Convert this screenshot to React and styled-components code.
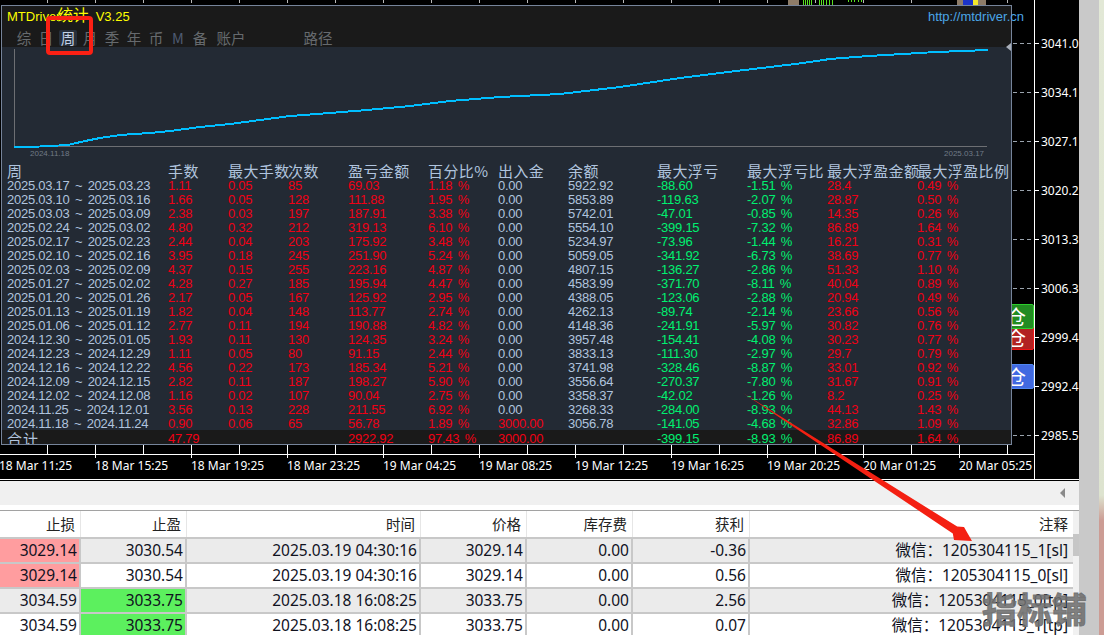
import React from "react";
import styled, { createGlobalStyle } from "styled-components";

const STEEL = "#b0c4de";
const RED = "#f00014";
const GREEN = "#00f070";
const CJK = '"Noto Sans CJK SC", "Noto Sans", sans-serif';
const PANEL_COLUMNS = "161px 60px 60px 60px 80px 70px 70px 89px 90px 80px 90px 1fr";

const GlobalStyle = createGlobalStyle`
  html, body { margin: 0; padding: 0; width: 1104px; height: 635px; overflow: hidden; background: #000; }
  * { box-sizing: border-box; }
`;

const Page = styled.div`
  position: relative;
  display: flex;
  width: 1104px;
  height: 635px;
  overflow: hidden;
`;
const Main = styled.div`
  width: 1079px;
  height: 635px;
  display: flex;
  flex-direction: column;
  background: #fff;
`;
const GreyStrip = styled.div`
  width: 20px;
  background: #c9c9c9;
`;
const PhotoEdge = styled.div`
  width: 5px;
  background: linear-gradient(#e2e8d6 0%, #dde3cf 78%, #cc9c94 82%, #cc9c94 100%);
`;

/* chart */
const Chart = styled.div`
  position: relative;
  height: 480px;
  flex: none;
  display: flex;
  background: #000;
  border-bottom: 1px solid #fff;
  overflow: hidden;
`;
const Plot = styled.div`
  width: 1035px;
  height: 100%;
  flex: none;
  display: flex;
  flex-direction: column;
  border-right: 1px solid #fff;
`;
const PlotBody = styled.div`
  height: 455px;
  flex: none;
  border-bottom: 1px solid #fff;
`;
const TimeAxis = styled.div`
  display: flex;
  margin-left: -1px;
  padding-top: 2px;
  color: #fff;
  font: 12px/18px "Noto Sans", sans-serif;
  white-space: nowrap;
`;
const TimeLabel = styled.span`
  width: 96px;
  flex: none;
`;
const PriceAxis = styled.div`
  flex: 1;
  min-width: 0;
  padding-top: 19px;
  display: flex;
  flex-direction: column;
  color: #fff;
  font: 12px/49px "Noto Sans", sans-serif;
  overflow: hidden;
`;
const PriceLabel = styled.div`
  height: 49px;
  display: flex;
  align-items: center;
  gap: 2px;
  flex: none;
  &::before {
    content: "";
    width: 4px;
    height: 1px;
    background: #fff;
    flex: none;
  }
`;
const ChartMarks = styled.svg`
  position: absolute;
  left: 0;
  top: 0;
`;
const TradeButton = styled.div`
  position: absolute;
  left: 1005px;
  top: ${(p) => p.$top}px;
  width: 29px;
  height: 25px;
  border-radius: 2px;
  background: ${(p) => p.$fill};
  border: 1px solid ${(p) => p.$edge};
  color: #fff;
  font: 20px/23px ${CJK};
  text-align: left;
  overflow: hidden;
  z-index: ${(p) => p.$layer};
`;

/* floating statistics window */
const StatsPanel = styled.div`
  position: absolute;
  left: 1px;
  top: 5px;
  width: 1011px;
  height: 440px;
  z-index: 5;
  display: flex;
  flex-direction: column;
  background: #232a34;
  border: 1px solid #76849a;
`;
const TitleBar = styled.div`
  height: 22px;
  flex: none;
  display: flex;
  justify-content: space-between;
  padding-left: 5px;
  background: #1a1a1a;
  font: 13px/22px "Liberation Sans", sans-serif;
  white-space: nowrap;
`;
const Title = styled.span`
  color: #ffff00;
`;
const TitleCjk = styled.span`
  font: 15.5px/14px ${CJK};
  margin-left: -3px;
`;
const SiteLink = styled.span`
  color: #4aa6e6;
  margin-right: -13px;
`;
const TabBar = styled.div`
  height: 19px;
  flex: none;
  display: flex;
  gap: 4px;
  padding: 2px 0 1px 13px;
  background: #1a1a1a;
`;
const Tab = styled.div`
  width: ${(p) => (p.$wide ? 36 : 18)}px;
  height: 16px;
  flex: none;
  margin-left: ${(p) => p.$push || 0}px;
  border-radius: 2px;
  text-align: center;
  white-space: nowrap;
  font: 14.5px/16px ${CJK};
  color: ${(p) => (p.$active ? "#c4d2e6" : p.$dim ? "#4e5a72" : "#666a6e")};
  background: ${(p) => (p.$active ? "#27303c" : "transparent")};
`;
const CurveBox = styled.div`
  position: relative;
  height: 116px;
  flex: none;
`;
const CurveSvg = styled.svg`
  display: block;
`;
const AxisDate = styled.text`
  font: 8px "Liberation Sans", sans-serif;
  fill: #717a87;
`;
const EdgeMark = styled.div`
  position: absolute;
  right: 0;
  top: -4px;
  width: 0;
  height: 0;
  border-top: 4px solid transparent;
  border-bottom: 4px solid transparent;
  border-right: 5px solid #a8aeb8;
`;
const StatsRow = styled.div`
  display: grid;
  grid-template-columns: ${PANEL_COLUMNS};
  height: ${(p) => p.$height || 14}px;
  flex: none;
  padding-left: 5px;
  white-space: nowrap;
  font: 13px/14px "Liberation Sans", sans-serif;
  letter-spacing: -0.25px;
  word-spacing: 2px;
`;
const HeadRow = styled(StatsRow)`
  color: ${STEEL};
  font: 15px/16px ${CJK};
  letter-spacing: 0.4px;
  word-spacing: 0;
`;
const TotalRow = styled(StatsRow)`
  background: #1a1a1a;
  margin-top: -1px;
  padding-top: 2px;
  overflow: hidden;
`;
const TotalLabel = styled.span`
  color: ${STEEL};
  font: 15px/14px ${CJK};
  letter-spacing: 1px;
`;
const Val = styled.span`
  color: ${(p) => p.$tone};
`;

/* order list */
const Toolbar = styled.div`
  height: 25px;
  flex: none;
  display: flex;
  align-items: center;
  justify-content: flex-end;
  padding-right: 14px;
  background: #f0f0f0;
  border-top: 1px solid #000;
`;
const ScrollLeft = styled.div`
  width: 0;
  height: 0;
  border-top: 5px solid transparent;
  border-bottom: 5px solid transparent;
  border-right: 5px solid #8a8a8a;
`;
const ListWrap = styled.div`
  margin-top: 5px;
  flex: 1;
  display: flex;
  border-top: 1px solid #a2a2a2;
  overflow: hidden;
`;
const OrderList = styled.div`
  width: 1073px;
  flex: none;
`;
const ScrollTrack = styled.div`
  flex: 1;
  background: #f1f1f1;
  padding-top: 23px;
`;
const ScrollThumb = styled.div`
  height: 22px;
  background: #c6c6c6;
`;
const ORDER_COLUMNS = "81px 106px 234px 106px 106px 117px 1fr";
const OrderHead = styled.div`
  display: grid;
  grid-template-columns: ${ORDER_COLUMNS};
  height: 28px;
  border-bottom: 2px solid #c8c8c8;
  background: #fff;
`;
const HeadCell = styled.div`
  text-align: right;
  padding-right: 5px;
  border-right: 1px solid #e6e6e6;
  color: #222;
  font: 14.5px/25px ${CJK};
  &:last-child { border-right: 0; }
`;
const OrderRow = styled.div`
  display: grid;
  grid-template-columns: ${ORDER_COLUMNS};
  height: 25px;
  border-bottom: 2px solid #c8c8c8;
  background: ${(p) => (p.$shade ? "#ebebeb" : "#fff")};
`;
const Cell = styled.div`
  text-align: right;
  padding-right: 2px;
  border-right: 2px solid #c8c8c8;
  color: #10121e;
  white-space: nowrap;
  font: 15.5px/22px "Noto Sans", ${CJK};
  background: ${(p) => p.$fill || "transparent"};
  &:last-child { border-right: 0; padding-right: 5px; }
`;

/* annotations */
const Annotation = styled.svg`
  position: absolute;
  left: 0;
  top: 0;
  z-index: 20;
  pointer-events: none;
`;
const Highlight = styled.div`
  position: absolute;
  left: 46px;
  top: 16px;
  width: 47px;
  height: 39px;
  border: 4px solid #fb2014;
  border-radius: 4px;
  z-index: 21;
`;
const Watermark = styled.div`
  position: absolute;
  left: 982px;
  top: 585px;
  z-index: 22;
  color: rgba(112, 112, 112, 0.9);
  -webkit-text-stroke: 1px rgba(112, 112, 112, 0.9);
  font: 700 35px/46px "Noto Sans CJK SC", sans-serif;
  white-space: nowrap;
`;

const prices = ["3041.0", "3034.1", "3027.1", "3020.2", "3013.3", "3006.3", "2999.4", "2992.4", "2985.5"];
const times = ["18 Mar 11:25", "18 Mar 15:25", "18 Mar 19:25", "18 Mar 23:25", "19 Mar 04:25", "19 Mar 08:25", "19 Mar 12:25", "19 Mar 16:25", "19 Mar 20:25", "20 Mar 01:25", "20 Mar 05:25"];
const tabs = [
  { t: "综" }, { t: "日" }, { t: "周", active: true }, { t: "月" }, { t: "季" }, { t: "年" }, { t: "币" },
  { t: "M", dim: true }, { t: "备" }, { t: "账户", wide: true }, { t: "路径", wide: true, push: 47 },
];
const heads = ["周", "手数", "最大手数", "次数", "盈亏金额", "百分比%", "出入金", "余额", "最大浮亏", "最大浮亏比", "最大浮盈金额", "最大浮盈比例"];
const tones = [STEEL, RED, RED, RED, RED, RED, STEEL, STEEL, GREEN, GREEN, RED, RED];
const rows = [
  ["2025.03.17 ~ 2025.03.23", "1.11", "0.05", "85", "69.03", "1.18 %", "0.00", "5922.92", "-88.60", "-1.51 %", "28.4", "0.49 %"],
  ["2025.03.10 ~ 2025.03.16", "1.66", "0.05", "128", "111.88", "1.95 %", "0.00", "5853.89", "-119.63", "-2.07 %", "28.87", "0.50 %"],
  ["2025.03.03 ~ 2025.03.09", "2.38", "0.03", "197", "187.91", "3.38 %", "0.00", "5742.01", "-47.01", "-0.85 %", "14.35", "0.26 %"],
  ["2025.02.24 ~ 2025.03.02", "4.80", "0.32", "212", "319.13", "6.10 %", "0.00", "5554.10", "-399.15", "-7.32 %", "86.89", "1.64 %"],
  ["2025.02.17 ~ 2025.02.23", "2.44", "0.04", "203", "175.92", "3.48 %", "0.00", "5234.97", "-73.96", "-1.44 %", "16.21", "0.31 %"],
  ["2025.02.10 ~ 2025.02.16", "3.95", "0.18", "245", "251.90", "5.24 %", "0.00", "5059.05", "-341.92", "-6.73 %", "38.69", "0.77 %"],
  ["2025.02.03 ~ 2025.02.09", "4.37", "0.15", "255", "223.16", "4.87 %", "0.00", "4807.15", "-136.27", "-2.86 %", "51.33", "1.10 %"],
  ["2025.01.27 ~ 2025.02.02", "4.28", "0.27", "185", "195.94", "4.47 %", "0.00", "4583.99", "-371.70", "-8.11 %", "40.04", "0.89 %"],
  ["2025.01.20 ~ 2025.01.26", "2.17", "0.05", "167", "125.92", "2.95 %", "0.00", "4388.05", "-123.06", "-2.88 %", "20.94", "0.49 %"],
  ["2025.01.13 ~ 2025.01.19", "1.82", "0.04", "148", "113.77", "2.74 %", "0.00", "4262.13", "-89.74", "-2.14 %", "23.66", "0.56 %"],
  ["2025.01.06 ~ 2025.01.12", "2.77", "0.11", "194", "190.88", "4.82 %", "0.00", "4148.36", "-241.91", "-5.97 %", "30.82", "0.76 %"],
  ["2024.12.30 ~ 2025.01.05", "1.93", "0.11", "130", "124.35", "3.24 %", "0.00", "3957.48", "-154.41", "-4.08 %", "30.23", "0.77 %"],
  ["2024.12.23 ~ 2024.12.29", "1.11", "0.05", "80", "91.15", "2.44 %", "0.00", "3833.13", "-111.30", "-2.97 %", "29.7", "0.79 %"],
  ["2024.12.16 ~ 2024.12.22", "4.56", "0.22", "173", "185.34", "5.21 %", "0.00", "3741.98", "-328.46", "-8.87 %", "33.01", "0.92 %"],
  ["2024.12.09 ~ 2024.12.15", "2.82", "0.11", "187", "198.27", "5.90 %", "0.00", "3556.64", "-270.37", "-7.80 %", "31.67", "0.91 %"],
  ["2024.12.02 ~ 2024.12.08", "1.16", "0.02", "107", "90.04", "2.75 %", "0.00", "3358.37", "-42.02", "-1.26 %", "8.2", "0.25 %"],
  ["2024.11.25 ~ 2024.12.01", "3.56", "0.13", "228", "211.55", "6.92 %", "0.00", "3268.33", "-284.00", "-8.93 %", "44.13", "1.43 %"],
  ["2024.11.18 ~ 2024.11.24", "0.90", "0.06", "65", "56.78", "1.89 %", "3000.00", "3056.78", "-141.05", "-4.68 %", "32.86", "1.09 %"],
];
const totals = ["47.79", "", "", "2922.92", "97.43 %", "3000.00", "", "-399.15", "-8.93 %", "86.89", "1.64 %"];
const totalTones = [RED, RED, RED, RED, RED, RED, STEEL, GREEN, GREEN, RED, RED];

const curve = "14,147 40,146.5 68,145 85,141 100,138 120,135 150,133 170,131 200,127 230,124 260,120 290,116 330,113 367,110 410,106 450,101 500,97 560,94 620,87 680,78 736,71 770,67 803,63 830,59 869,56 936,52 988,50";

const PINK = "#ff9d9f";
const LIME = "#5cf05e";
const orderHeads = ["止损", "止盈", "时间", "价格", "库存费", "获利", "注释"];
const orders = [
  { sl: "3029.14", tp: "3030.54", time: "2025.03.19 04:30:16", price: "3029.14", pnl: "-0.36", note: "微信：1205304115_1[sl]", slFill: PINK },
  { sl: "3029.14", tp: "3030.54", time: "2025.03.19 04:30:16", price: "3029.14", pnl: "0.56", note: "微信：1205304115_0[sl]", slFill: PINK },
  { sl: "3034.59", tp: "3033.75", time: "2025.03.18 16:08:25", price: "3033.75", pnl: "2.56", note: "微信：1205304115_0[tp]", tpFill: LIME },
  { sl: "3034.59", tp: "3033.75", time: "2025.03.18 16:08:25", price: "3033.75", pnl: "0.07", note: "微信：1205304115_1[tp]", tpFill: LIME },
];

function Marks() {
  const topTicks = Array.from({ length: 22 }, (_, i) => 47 + 48 * i);
  const bottomTicks = Array.from({ length: 21 }, (_, i) => 47 + 48 * i);
  const gridY = [43, 92, 141, 190, 239, 288, 337, 386, 435];
  return (
    <ChartMarks width="1034" height="460" viewBox="0 0 1034 460" shapeRendering="crispEdges">
      {topTicks.map((x) => <rect key={x} x={x} y="0" width="1" height="3" fill="#b8b8b8" />)}
      {bottomTicks.map((x, i) => <rect key={x} x={x} y="445" width="1" height={i % 2 ? 13 : 9} fill="#fff" />)}
      {gridY.map((y) => <line key={y} x1="1013" x2="1034" y1={y} y2={y} stroke="#9aa3ad" strokeDasharray="4 3" />)}
      <rect x="788" y="0" width="11" height="5" fill="#8e7c68" />
      {[803, 805, 807, 809, 811, 819, 821, 823, 826, 829, 832].map((x) => <rect key={x} x={x} y="0" width="1" height="5" fill="#58e020" />)}
      {[848, 851, 854, 858, 861].map((x) => <rect key={x} x={x} y="0" width="1" height="2" fill="#58e020" />)}
      <rect x="957" y="0" width="29" height="5" fill="#8e7c68" />
      <rect x="963" y="0" width="10" height="5" fill="#1c34c8" />
      <rect x="973" y="0" width="5" height="5" fill="#f4e82c" />
    </ChartMarks>
  );
}

export default function App() {
  return (
    <Page>
      <GlobalStyle />
      <Main>
        <Chart>
          <Marks />
          <Plot>
            <PlotBody />
            <TimeAxis>
              {times.map((t) => <TimeLabel key={t}>{t}</TimeLabel>)}
            </TimeAxis>
          </Plot>
          <PriceAxis>
            {prices.map((p) => <PriceLabel key={p}>{p}</PriceLabel>)}
          </PriceAxis>
          <TradeButton $top={325} $fill="#b22222" $edge="#f01414" $layer={1}>仓</TradeButton>
          <TradeButton $top={304} $fill="#228b22" $edge="#2ccf2c" $layer={2}>仓</TradeButton>
          <TradeButton $top={364} $fill="#4169e1" $edge="#4f86f0" $layer={2}>仓</TradeButton>
          <StatsPanel>
            <TitleBar>
              <Title>MTDriver<TitleCjk>统计</TitleCjk>, V3.25</Title>
              <SiteLink>http://mtdriver.cn</SiteLink>
            </TitleBar>
            <TabBar>
              {tabs.map((tab) => (
                <Tab key={tab.t} $active={tab.active} $dim={tab.dim} $wide={tab.wide} $push={tab.push}>{tab.t}</Tab>
              ))}
            </TabBar>
            <CurveBox>
              <CurveSvg width="1009" height="116" viewBox="2 47 1009 116">
                <path d="M14 49 V146.5 H987" fill="none" stroke="#6d6f73" strokeWidth="1" shapeRendering="crispEdges" />
                <polyline points={curve} fill="none" stroke="#00bfff" strokeWidth="2" shapeRendering="crispEdges" />
                <AxisDate x="30" y="156">2024.11.18</AxisDate>
                <AxisDate x="944" y="156">2025.03.17</AxisDate>
              </CurveSvg>
              <EdgeMark />
            </CurveBox>
            <HeadRow $height={16}>
              {heads.map((h) => <span key={h}>{h}</span>)}
            </HeadRow>
            {rows.map((r) => (
              <StatsRow key={r[0]}>
                {r.map((v, i) => (
                  <Val key={i} $tone={i === 6 && v !== "0.00" ? RED : tones[i]}>{v}</Val>
                ))}
              </StatsRow>
            ))}
            <TotalRow>
              <TotalLabel>合计</TotalLabel>
              {totals.map((v, i) => <Val key={i} $tone={totalTones[i]}>{v}</Val>)}
            </TotalRow>
          </StatsPanel>
        </Chart>
        <Toolbar><ScrollLeft /></Toolbar>
        <ListWrap>
          <OrderList>
            <OrderHead>
              {orderHeads.map((h) => <HeadCell key={h}>{h}</HeadCell>)}
            </OrderHead>
            {orders.map((o, i) => (
              <OrderRow key={o.note} $shade={i % 2 === 0}>
                <Cell $fill={o.slFill}>{o.sl}</Cell>
                <Cell $fill={o.tpFill}>{o.tp}</Cell>
                <Cell>{o.time}</Cell>
                <Cell>{o.price}</Cell>
                <Cell>0.00</Cell>
                <Cell>{o.pnl}</Cell>
                <Cell>{o.note}</Cell>
              </OrderRow>
            ))}
          </OrderList>
          <ScrollTrack><ScrollThumb /></ScrollTrack>
        </ListWrap>
      </Main>
      <GreyStrip />
      <PhotoEdge />
      <Highlight />
      <Annotation width="1104" height="635" viewBox="0 0 1104 635">
        <path d="M743 393 L957.2 526.6 L964 527 L972 541 L954 540 L952.8 533.4 Z" fill="#f42012" />
      </Annotation>
      <Watermark>指标铺</Watermark>
    </Page>
  );
}
